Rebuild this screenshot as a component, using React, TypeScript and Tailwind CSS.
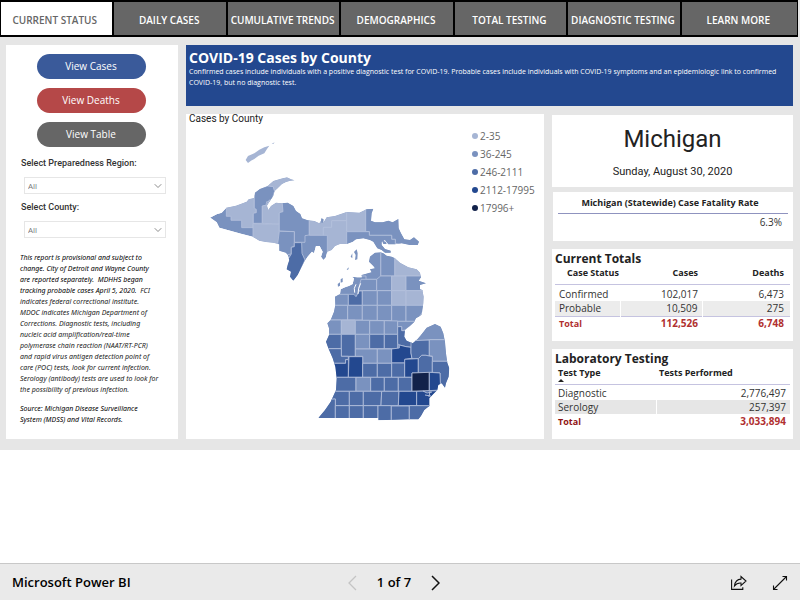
import { ChevronDown } from "lucide-react";

const tabs = [
  "CURRENT STATUS",
  "DAILY CASES",
  "CUMULATIVE TRENDS",
  "DEMOGRAPHICS",
  "TOTAL TESTING",
  "DIAGNOSTIC TESTING",
  "LEARN MORE",
];

const views = [
  { label: "View Cases", color: "bg-[#3a5a9a]" },
  { label: "View Deaths", color: "bg-[#b54848]" },
  { label: "View Table", color: "bg-[#666666]" },
];

const legend = [
  { label: "2-35", color: "bg-[#a6b5d4]" },
  { label: "36-245", color: "bg-[#7a92bf]" },
  { label: "246-2111", color: "bg-[#4d6ca6]" },
  { label: "2112-17995", color: "bg-[#23488f]" },
  { label: "17996+", color: "bg-[#12224a]" },
];

const C1 = "#a6b5d4";
const C2 = "#7a92bf";
const C3 = "#4d6ca6";
const C4 = "#23488f";
const C5 = "#12224a";

type Area = { fill: string; points: string };

const upperWestShore =
  "72,323 92,313 107,308 121,293 150,287 182,275 188,268 205,264 207,248 222,237 245,228 262,213 285,206 303,202 315,208 326,211 313,212 300,216 288,222 275,235 266,243 262,258 252,272 243,287 247,300 255,288 270,278 288,280 305,278 322,288 330,303 343,312 348,325 365,331 385,333 400,340 410,325 410,402 411,410 402,408 390,408 384,430 378,425 365,440 355,455 345,475 335,495 322,512 312,500 315,485 302,478 305,465 310,450 305,435 300,428 280,422 280,403 262,398 240,396 220,392 200,380 165,371 100,353 92,337 75,325";

const upperWest: Area[] = [
  { fill: C1, points: "121,280 205,255 205,295 211,298 211,308 202,310 202,353 167,353 167,331 135,331 135,319 121,319" },
  { fill: C2, points: "205,240 245,228 262,230 266,243 256,275 242,275 240,287 229,288 229,340 202,340 202,310 211,308 211,298 205,295" },
  { fill: C1, points: "240,226 262,195 330,195 330,220 266,245 262,230" },
  { fill: C1, points: "229,288 242,285 250,270 288,270 291,305 280,308 280,342 229,340" },
  { fill: C1, points: "201,341 280,343 280,410 201,400" },
  { fill: C2, points: "280,308 291,305 288,270 370,270 370,375 357,377 357,397 325,397 325,365 280,363" },
  { fill: C2, points: "280,364 325,365 325,410 316,412 316,432 270,440" },
  { fill: C3, points: "325,398 347,398 348,430 357,450 322,530 280,490 316,432 316,412 325,410" },
  { fill: C1, points: "370,310 420,310 420,352 414,352 414,376 370,376" },
];

const upperEastShore =
  "0,100 10,98 20,82 45,78 80,66 118,68 140,58 160,56 155,70 153,92 165,97 188,97 205,92 218,97 235,87 236,115 243,130 253,148 270,150 282,142 297,155 293,165 270,165 245,160 225,163 205,163 195,150 185,155 185,165 195,177 212,182 212,188 195,188 185,180 172,175 160,155 150,150 130,145 108,148 98,155 80,162 60,162 45,168 35,180 22,185 17,203 10,210 3,200 8,185 0,170";

const upperEast: Area[] = [
  { fill: C1, points: "-5,60 80,50 80,92 35,92 35,112 10,112 10,136 -5,136" },
  { fill: C1, points: "10,112 35,112 35,92 80,92 80,190 22,190 22,136 10,136" },
  { fill: C1, points: "80,50 137,50 137,124 80,124" },
  { fill: C2, points: "137,50 310,50 310,175 226,160 226,148 215,148 215,136 148,136 148,125 137,125" },
  { fill: C2, points: "80,125 148,125 148,136 215,136 215,148 226,148 226,200 80,200" },
];

const lowerShore =
  "212,-113 220,-110 230,-103 245,-100 255,-95 270,-82 295,-68 320,-62 330,-52 333,-38 326,-28 348,-20 330,-15 330,-2 337,0 341,20 340,40 337,60 335,75 318,85 312,97 300,108 285,120 283,140 290,152 308,160 322,148 333,135 350,113 375,102 392,110 400,130 405,155 408,190 412,218 418,235 416,260 408,280 405,293 395,280 385,285 382,300 370,312 358,325 358,348 343,360 333,378 325,388 298,388 205,391 205,384 25,384 45,360 62,335 78,300 80,265 76,230 68,205 55,175 48,155 57,135 57,115 52,100 62,90 72,65 76,45 75,20 90,12 92,-2 105,-8 118,-13 128,-18 132,-35 125,-40 142,-38 155,-38 155,-45 185,-53 180,-62 195,-65 190,-72 177,-85 180,-100 195,-112";

const lower: Area[] = [
  { fill: C1, points: "254,-120 350,-120 350,-42 254,-42" },
  { fill: C2, points: "212,-120 254,-120 254,-42 212,-42" },
  { fill: C2, points: "170,-120 212,-120 212,-32 168,-32 168,-42 150,-42" },
  { fill: C2, points: "153,-32 200,-32 200,2 145,2" },
  { fill: C2, points: "200,-32 212,-42 245,-42 245,2 200,2" },
  { fill: C1, points: "245,-42 288,-42 288,2 245,2" },
  { fill: C2, points: "288,-42 360,-42 360,2 288,2" },
  { fill: C2, points: "60,13 115,13 115,46 60,46" },
  { fill: C3, points: "115,13 132,13 138,20 148,3 157,3 157,46 115,46" },
  { fill: C2, points: "157,2 202,2 202,46 157,46" },
  { fill: C2, points: "202,2 245,2 245,46 202,46" },
  { fill: C1, points: "245,2 288,2 288,46 245,46" },
  { fill: C1, points: "288,2 350,2 350,46 288,46" },
  { fill: C2, points: "60,46 113,46 113,90 50,90" },
  { fill: C2, points: "113,46 157,46 157,90 113,90" },
  { fill: C2, points: "157,46 202,46 202,91 157,91" },
  { fill: C2, points: "202,46 245,46 245,92 202,92" },
  { fill: C2, points: "245,46 288,46 288,94 245,94" },
  { fill: C2, points: "288,46 350,46 320,94 288,94" },
  { fill: C2, points: "40,90 94,90 94,133 40,133" },
  { fill: C1, points: "94,90 136,90 136,133 94,133" },
  { fill: C2, points: "136,91 179,91 179,133 136,133" },
  { fill: C2, points: "179,92 223,92 223,133 179,133" },
  { fill: C2, points: "223,92 263,93 263,133 223,133" },
  { fill: C2, points: "263,94 320,94 285,120 275,122 275,110 263,110" },
  { fill: C3, points: "40,133 94,133 94,176 40,176" },
  { fill: C3, points: "94,133 136,133 136,199 94,199" },
  { fill: C2, points: "136,133 179,133 179,177 136,177" },
  { fill: C3, points: "179,133 223,133 223,176 179,176" },
  { fill: C3, points: "223,133 263,133 263,176 223,176" },
  { fill: C3, points: "263,110 275,110 275,122 285,122 308,160 303,172 288,170 268,165 263,160" },
  { fill: C3, points: "50,176 94,176 94,199 115,199 115,209 107,209 107,220 60,220" },
  { fill: C2, points: "136,177 202,177 202,220 158,220 158,199 136,199" },
  { fill: C2, points: "202,177 245,177 245,220 202,220" },
  { fill: C4, points: "245,177 268,174 268,165 288,170 303,172 303,189 306,205 285,208 285,219 245,219" },
  { fill: C3, points: "303,150 358,150 358,198 348,196 335,196 325,206 306,206 303,189" },
  { fill: C2, points: "300,153 350,90 430,100 430,149 358,149" },
  { fill: C2, points: "358,149 420,149 420,214 367,214 367,198 358,198" },
  { fill: C4, points: "60,220 107,220 107,209 115,209 115,262 60,262" },
  { fill: C4, points: "117,200 158,200 158,262 115,262" },
  { fill: C3, points: "158,220 202,220 202,262 158,262" },
  { fill: C3, points: "202,220 245,220 245,262 202,262" },
  { fill: C3, points: "245,219 284,219 284,262 245,262" },
  { fill: C4, points: "284,208 325,206 325,249 306,249 306,262 284,262" },
  { fill: C3, points: "325,206 335,196 348,196 367,200 367,247 325,249" },
  { fill: C3, points: "367,214 430,214 430,300 405,300 390,278 390,249 367,247" },
  { fill: C3, points: "60,262 138,262 138,304 60,304" },
  { fill: C2, points: "138,262 182,262 182,304 138,304" },
  { fill: C3, points: "182,262 223,262 223,304 182,304" },
  { fill: C3, points: "223,262 265,262 265,304 223,304" },
  { fill: C3, points: "265,262 306,262 306,304 265,304" },
  { fill: C5, points: "306,249 358,247 358,302 306,304" },
  { fill: C4, points: "358,247 390,249 392,300 358,302" },
  { fill: C3, points: "40,304 118,304 118,347 76,347 76,327 50,330" },
  { fill: C3, points: "118,304 160,304 160,347 118,347" },
  { fill: C3, points: "160,304 215,304 213,347 160,347" },
  { fill: C3, points: "215,304 267,304 265,347 213,347" },
  { fill: C4, points: "267,304 320,304 320,347 265,347" },
  { fill: C4, points: "320,304 390,302 370,350 320,347" },
  { fill: C3, points: "10,390 50,328 76,327 76,390" },
  { fill: C3, points: "76,347 118,347 118,390 76,390" },
  { fill: C3, points: "118,347 160,347 160,390 118,390" },
  { fill: C3, points: "160,347 204,347 204,390 160,390" },
  { fill: C3, points: "204,347 244,347 244,395 204,395" },
  { fill: C3, points: "244,348 298,348 298,395 244,395" },
  { fill: C3, points: "298,347 360,347 330,395 298,395" },
];

function Region({ id, shore, areas, transform }: { id: string; shore: string; areas: Area[]; transform: string }) {
  return (
    <g transform={transform}>
      <clipPath id={id}>
        <polygon points={shore} />
      </clipPath>
      <g clipPath={`url(#${id})`}>
        <polygon points={shore} fill={C2} />
        {areas.map((a) => (
          <polygon key={a.points} points={a.points} fill={a.fill} stroke="#b4c0dc" strokeWidth="2.5" />
        ))}
      </g>
    </g>
  );
}

function MichiganMap() {
  return (
    <svg viewBox="206 140 250 290" className="h-[290px] w-[250px]" role="img" aria-label="Map of cases by county">
      <Region id="upper-west" shore={upperWestShore} areas={upperWest} transform="translate(186 110) scale(0.3333)" />
      <Region id="upper-east" shore={upperEastShore} areas={upperEast} transform="translate(320 190) scale(0.3333)" />
      <Region id="lower" shore={lowerShore} areas={lower} transform="translate(310 290) scale(0.3333)" />
      <g transform="translate(186 110) scale(0.3333)" fill={C1}>
        <polygon points="179,150 186,138 205,130 220,119 235,112 250,107 243,117 235,130 218,137 205,147 195,152 186,159" />
        <polygon points="257,101 266,97 262,102" />
      </g>
      <g transform="translate(320 190) scale(0.3333)">
        <g fill={C2}>
          <polygon points="102,186 110,178 113,190 112,208 105,210 107,195" />
          <polygon points="92,200 97,190 97,205" />
          <polygon points="62,268 68,264 68,276 62,278" />
          <polygon points="53,282 60,277 60,287 54,290" />
          <polygon points="80,238 87,232 84,240" />
          <polygon points="185,150 198,156 200,162 190,162" />
          <polygon points="3,85 11,88 10,98 4,98" />
        </g>
        <path d="M114 312 116 295 122 280 M104 308 103 295 108 283" stroke="#fff" strokeWidth="3" fill="none" />
      </g>
      <path d="M423 391l4 2 5-1M425 395l6 1M430 391l-1 6" stroke="#b4c0dc" strokeWidth="1" fill="none" />
    </svg>
  );
}

function Picker({ id, label }: { id: string; label: string }) {
  return (
    <div>
      <label htmlFor={id} className="block pl-[15px] font-['Roboto',sans-serif] text-[9px] leading-3 font-medium text-[#333]">
        {label}
      </label>
      <div className="relative mt-2 mr-3 ml-[18px]">
        <select
          id={id}
          className="block h-[17px] w-full appearance-none border border-[#e6e6e6] bg-white pl-[3px] text-[8px] text-[#777]"
        >
          <option>All</option>
        </select>
        <ChevronDown className="pointer-events-none absolute top-[3px] right-[2px] size-3 text-[#666]" strokeWidth={1.5} />
      </div>
    </div>
  );
}

function Sidebar() {
  return (
    <aside className="w-[172px] shrink-0 bg-white pt-[9px]">
      <div className="flex flex-col items-center gap-[9px] pr-[2px]">
        {views.map((v) => (
          <button key={v.label} className={`${v.color} h-[25px] w-[109px] rounded-full text-[10px] text-white`}>
            {v.label}
          </button>
        ))}
      </div>
      <div className="mt-[10px] flex flex-col gap-[7px]">
        <Picker id="region" label="Select Preparedness Region:" />
        <Picker id="county" label="Select County:" />
      </div>
      <div className="mt-[14px] pl-[14px] font-['Noto_Sans',sans-serif] text-[7px] leading-[11px] whitespace-nowrap text-[#222] italic">
        <p>
          <span className="text-black">
            This report is provisional and subject to
            <br />
            change. City of Detroit and Wayne County
            <br />
            are reported separately.&nbsp; MDHHS began
            <br />
            tracking probable cases April 5, 2020.&nbsp;
          </span>{" "}
          FCI
          <br />
          indicates federal correctional institute.
          <br />
          MDOC indicates Michigan Department of
          <br />
          Corrections. Diagnostic tests, including
          <br />
          nucleic acid amplification/real-time
          <br />
          polymerase chain reaction (NAAT/RT-PCR)
          <br />
          and rapid virus antigen detection point of
          <br />
          care (POC) tests, look for current infection.
          <br />
          Serology (antibody) tests are used to look for
          <br />
          the possibility of previous infection.
        </p>
        <p className="mt-2 text-black">
          Source: Michigan Disease Surveillance
          <br />
          System (MDSS) and Vital Records.
        </p>
      </div>
    </aside>
  );
}

function CurrentTotals() {
  return (
    <section className="h-[92px] bg-white px-[3px] pt-[2px]">
      <h2 className="text-[12px] leading-[15px] font-bold text-[#222]">Current Totals</h2>
      <table className="w-full table-fixed border-collapse text-[10px] leading-[13px] text-[#333]">
        <thead>
          <tr className="h-[18px] border-b border-[#c5c3e0] align-top text-[9px] text-[#222]">
            <th className="w-[65px] pl-3 text-left font-bold whitespace-nowrap">Case Status</th>
            <th className="w-[82px] pr-1 text-right font-bold">Cases</th>
            <th className="pr-[6px] text-right font-bold">Deaths</th>
          </tr>
        </thead>
        <tbody>
          <tr className="h-[17px]">
            <td className="pt-[3px] pl-1">Confirmed</td>
            <td className="pt-[3px] pr-1 text-right">102,017</td>
            <td className="pt-[3px] pr-[6px] text-right">6,473</td>
          </tr>
          <tr className="h-[15px] border-b border-[#c5c3e0] bg-[#ececec]">
            <td className="pl-1">Probable</td>
            <td className="border-x border-white pr-1 text-right">10,509</td>
            <td className="pr-[6px] text-right">275</td>
          </tr>
          <tr className="h-[15px] font-bold text-[#b03030]">
            <td className="pl-1 text-[9px]">Total</td>
            <td className="pr-1 text-right">112,526</td>
            <td className="pr-[6px] text-right">6,748</td>
          </tr>
        </tbody>
      </table>
    </section>
  );
}

function LaboratoryTesting() {
  return (
    <section className="h-[90px] bg-white px-[3px] pt-[2px]">
      <h2 className="text-[12px] leading-[15px] font-bold text-[#222]">Laboratory Testing</h2>
      <table className="w-full table-fixed border-collapse text-[10px] leading-[13px] text-[#333]">
        <thead>
          <tr className="h-[18px] border-b border-[#c5c3e0] align-top text-[9px] text-[#222]">
            <th className="w-[101px] pl-[3px] text-left font-bold">
              <span className="block leading-[13px]">Test Type</span>
              <svg viewBox="0 0 6 3" className="mb-px block h-[3px] w-[6px]">
                <path d="M0 3 3 0l3 3z" fill="#222" />
              </svg>
            </th>
            <th className="pl-[3px] text-left font-bold">Tests Performed</th>
          </tr>
        </thead>
        <tbody>
          <tr className="h-4">
            <td className="pt-[2px] pl-[3px]">Diagnostic</td>
            <td className="pt-[2px] pr-1 text-right">2,776,497</td>
          </tr>
          <tr className="h-[14px] bg-[#e6e6e6]">
            <td className="border-r border-white pl-[3px]">Serology</td>
            <td className="pr-1 text-right">257,397</td>
          </tr>
          <tr className="h-[15px] font-bold text-[#b03030]">
            <td className="pl-[3px] text-[9px] text-[#8f1414]">Total</td>
            <td className="pr-1 text-right">3,033,894</td>
          </tr>
        </tbody>
      </table>
    </section>
  );
}

export default function App() {
  return (
    <div className="flex min-h-screen flex-col bg-white font-['Open_Sans','Noto_Sans',sans-serif]">
      <main className="bg-[#e6e6e6] pb-[11px]">
        <nav className="mr-[2px] grid h-[37px] grid-cols-[repeat(6,minmax(0,112fr))_minmax(0,116fr)] gap-[2px] border-x-[1px] border-t-2 border-b-2 border-black bg-black">
          {tabs.map((t, i) => (
            <button
              key={t}
              className={
                i === 0
                  ? "bg-white pt-[3px] pr-1 text-[10px] font-semibold whitespace-nowrap text-[#666]"
                  : "bg-[#666] pt-[3px] pr-[2px] text-[10px] font-semibold whitespace-nowrap text-white"
              }
            >
              {t}
            </button>
          ))}
        </nav>
        <div className="mt-2 mr-[7px] ml-[6px] flex gap-2">
          <Sidebar />
          <div className="flex min-w-0 grow flex-col gap-2">
            <header className="h-[61px] bg-[#23488f] px-[3px] pt-1 text-white">
              <h1 className="text-[14px] leading-[17px] font-bold">COVID-19 Cases by County</h1>
              <p className="text-[7px] leading-[11px]">
                Confirmed cases include individuals with a positive diagnostic test for COVID-19. Probable cases include
                individuals with COVID-19 symptoms and an epidemiologic link to confirmed COVID-19, but no diagnostic test.
              </p>
            </header>
            <div className="flex gap-2">
              <section className="h-[325px] min-w-0 grow bg-white px-[3px]">
                <h2 className="font-['Roboto',sans-serif] text-[10px] leading-[10px] text-[#222]">Cases by County</h2>
                <div className="flex justify-between pt-4 pr-2 pl-[17px]">
                  <MichiganMap />
                  <ul className="-mt-[13px] w-[61px] text-[10px] leading-[18px] whitespace-nowrap text-[#666]">
                    {legend.map((l) => (
                      <li key={l.label} className="flex items-center gap-[2px]">
                        <span className={`${l.color} size-[6px] shrink-0 rounded-full`} />
                        {l.label}
                      </li>
                    ))}
                  </ul>
                </div>
              </section>
              <div className="flex w-[241px] shrink-0 flex-col">
                <section className="mt-px mb-[5px] h-[72px] bg-white pt-[9px] text-center font-['Roboto',sans-serif] text-[#222]">
                  <p className="text-[24px] leading-[30px]">Michigan</p>
                  <p className="mt-[11px] text-[11px] leading-[13px]">Sunday, August 30, 2020</p>
                </section>
                <section className="mb-2 ml-px h-[49px] bg-white px-[5px] pt-1">
                  <h2 className="border-b border-[#8f93bf] pr-[6px] pb-1 text-center text-[9px] leading-[13px] font-bold text-[#222]">
                    Michigan (Statewide) Case Fatality Rate
                  </h2>
                  <p className="pt-[2px] pr-[6px] text-right text-[10px] leading-[13px] text-[#333]">6.3%</p>
                </section>
                <CurrentTotals />
                <div className="h-2" />
                <LaboratoryTesting />
              </div>
            </div>
          </div>
        </div>
      </main>
      <footer className="mt-auto grid h-[37px] grid-cols-[1fr_auto_1fr] items-center border-t border-[#c8c8c8] bg-[#eaeaea] px-3 text-[13px] font-semibold text-black">
        <span className="pt-[2px]">Microsoft Power BI</span>
        <div className="mr-3 flex items-center justify-center gap-5 pt-[2px]">
          <button aria-label="Previous page">
            <svg viewBox="0 0 9 16" className="h-4 w-[9px]" fill="none" stroke="#c4c4c4" strokeWidth="1.3">
              <path d="M8 1 1 8l7 7" />
            </svg>
          </button>
          <span>1 of 7</span>
          <button aria-label="Next page">
            <svg viewBox="0 0 9 16" className="h-4 w-[9px]" fill="none" stroke="#111" strokeWidth="1.5">
              <path d="m1 1 7 7-7 7" />
            </svg>
          </button>
        </div>
        <div className="flex items-center justify-end gap-[25px] pt-[2px]">
          <button aria-label="Share">
            <svg viewBox="0 0 16 16" className="size-4" fill="none" stroke="#111" strokeWidth="1.1">
              <path d="M.6 4.5v9.9h11.2v-2.2M3.5 10.8C4 6.8 6.3 4.3 10 4.1V1.5l5 4.5-5 4.6V8C7 7.8 5 8.8 3.5 10.8Z" />
            </svg>
          </button>
          <button aria-label="Full screen">
            <svg viewBox="0 0 16 16" className="size-4" fill="none" stroke="#111" strokeWidth="1.1">
              <path d="M1.5 14.5 14.5 1.5M10.5 1.5h4v4M1.5 10.5v4h4" />
            </svg>
          </button>
        </div>
      </footer>
    </div>
  );
}
